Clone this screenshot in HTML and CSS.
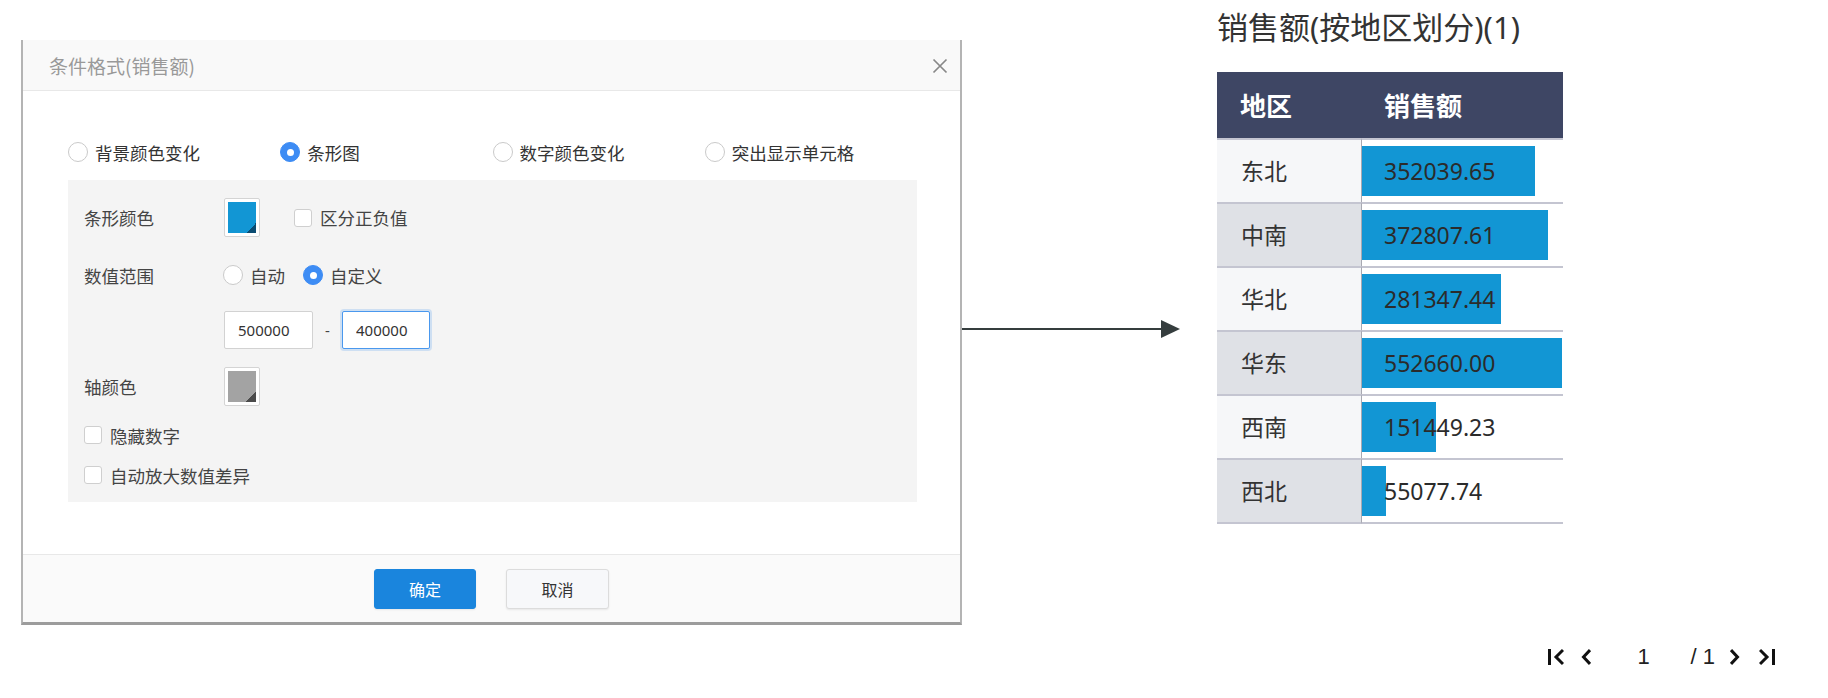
FILE: index.html
```html
<!DOCTYPE html>
<html lang="zh-CN">
<head>
  <meta charset="UTF-8">
  <title>条件格式(销售额)</title>
  <link rel="stylesheet" href="styles.css">
</head>
<body>
  <div class="page">
    <div class="dialog">
      <div class="dialog-head">
        <span class="dialog-title">条件格式(销售额)</span>
        <svg class="close" width="16" height="16" viewBox="0 0 16 16"><path d="M1.5 1.5L14.5 14.5M14.5 1.5L1.5 14.5" stroke="#888" stroke-width="1.7" fill="none"/></svg>
      </div>

      <div class="dialog-body">
        <div class="type-row">
          <span class="opt"><span class="radio"></span>背景颜色变化</span>
          <span class="opt"><span class="radio checked"></span>条形图</span>
          <span class="opt"><span class="radio"></span>数字颜色变化</span>
          <span class="opt"><span class="radio"></span>突出显示单元格</span>
        </div>

        <div class="panel">
          <div class="row row-color">
            <span class="label">条形颜色</span>
            <span class="swatch"><span class="swatch-fill blue"></span></span>
            <span class="check gap-left"><span class="box"></span>区分正负值</span>
          </div>
          <div class="row row-range">
            <span class="label">数值范围</span>
            <span class="opt-sm"><span class="radio"></span>自动</span>
            <span class="opt-sm"><span class="radio checked"></span>自定义</span>
          </div>
          <div class="row row-inputs">
            <input class="num-input" type="text" value="500000">
            <span class="dash">-</span>
            <input class="num-input focus" type="text" value="400000">
          </div>
          <div class="row row-axis">
            <span class="label">轴颜色</span>
            <span class="swatch"><span class="swatch-fill gray"></span></span>
          </div>
          <div class="row row-check">
            <span class="check"><span class="box"></span>隐藏数字</span>
          </div>
          <div class="row row-check last">
            <span class="check"><span class="box"></span>自动放大数值差异</span>
          </div>
        </div>
      </div>

      <div class="dialog-foot">
        <button class="btn btn-primary">确定</button>
        <button class="btn">取消</button>
      </div>
    </div>

    <div class="arrow">
      <span class="arrow-line"></span>
      <span class="arrow-head"></span>
    </div>

    <div class="report">
      <div class="report-title">销售额(按地区划分)(1)</div>
      <table class="grid">
        <thead>
          <tr>
            <th><div class="th-in">地区</div></th>
            <th><div class="th-in th-val">销售额</div></th>
          </tr>
        </thead>
        <tbody>
          <tr class="odd">
            <td class="area"><div class="cell">东北</div></td>
            <td class="val"><div class="cell-bar"><span class="bar" style="width: 173px;"></span><span class="num">352039.65</span></div></td>
          </tr>
          <tr class="even">
            <td class="area"><div class="cell">中南</div></td>
            <td class="val"><div class="cell-bar"><span class="bar" style="width: 186px;"></span><span class="num">372807.61</span></div></td>
          </tr>
          <tr class="odd">
            <td class="area"><div class="cell">华北</div></td>
            <td class="val"><div class="cell-bar"><span class="bar" style="width: 139px;"></span><span class="num">281347.44</span></div></td>
          </tr>
          <tr class="even">
            <td class="area"><div class="cell">华东</div></td>
            <td class="val"><div class="cell-bar"><span class="bar" style="width: 200px;"></span><span class="num">552660.00</span></div></td>
          </tr>
          <tr class="odd">
            <td class="area"><div class="cell">西南</div></td>
            <td class="val"><div class="cell-bar"><span class="bar" style="width: 74px;"></span><span class="num">151449.23</span></div></td>
          </tr>
          <tr class="even">
            <td class="area"><div class="cell">西北</div></td>
            <td class="val"><div class="cell-bar"><span class="bar" style="width: 24px;"></span><span class="num">55077.74</span></div></td>
          </tr>
        </tbody>
      </table>

      <div class="pager">
        <svg class="pg-first" width="16" height="18" viewBox="0 0 16 18"><path d="M1.5 1V17M15 2L8 9L15 16" stroke="#111" stroke-width="3" fill="none"/></svg>
        <svg class="pg-prev" width="10" height="18" viewBox="0 0 10 18"><path d="M9 2L2.5 9L9 16" stroke="#111" stroke-width="3" fill="none"/></svg>
        <span class="pg-cur">1</span>
        <span class="pg-total">/ 1</span>
        <svg class="pg-next" width="10" height="18" viewBox="0 0 10 18"><path d="M1 2L7.5 9L1 16" stroke="#111" stroke-width="3" fill="none"/></svg>
        <svg class="pg-last" width="16" height="18" viewBox="0 0 16 18"><path d="M1 2L8 9L1 16M14.5 1V17" stroke="#111" stroke-width="3" fill="none"/></svg>
      </div>
    </div>
  </div>
</body>
</html>
```

FILE: styles.css
```css
body {
  margin: 0;
  background-color: #fff;
  font-family: "Noto Sans CJK SC", "Noto Sans", sans-serif;
  color: #333;
}

.page {
  display: flex;
  align-items: flex-start;
  width: 1828px;
  height: 698px;
  padding-left: 21px;
  box-sizing: border-box;
}

/* dialog */

.dialog {
  width: 941px;
  margin-top: 40px;
  background-color: #fff;
  border-left: 2px solid #b4b4b4;
  border-right: 2px solid #b4b4b4;
  border-bottom: 3px solid #9c9c9c;
  box-sizing: border-box;
}

.dialog-head {
  height: 50px;
  display: flex;
  align-items: center;
  justify-content: space-between;
  padding: 0 12px 0 26px;
  background-color: #f9f9f9;
  border-bottom: 1px solid #e8e8e8;
}

.dialog-title {
  font-size: 19px;
  color: #999;
}

.close {
  margin-top: 2px;
}

.dialog-body {
  height: 463px;
  padding: 49px 43px 0 45px;
  box-sizing: border-box;
}

.type-row {
  display: flex;
  height: 24px;
  align-items: center;
  margin-bottom: 16px;
}

.opt {
  width: 214px;
  display: flex;
  align-items: center;
  font-size: 17.5px;
  color: #333;
}

.radio {
  width: 20px;
  height: 20px;
  border: 1px solid #cacaca;
  border-radius: 50%;
  background-color: #fff;
  box-sizing: border-box;
  margin-right: 7px;
  flex-shrink: 0;
  display: flex;
  align-items: center;
  justify-content: center;
}

.radio.checked {
  background-color: #3d8cf4;
  border-color: #3d8cf4;
}

.radio.checked::after {
  content: "";
  width: 7px;
  height: 7px;
  border-radius: 50%;
  background-color: #fff;
}

.panel {
  background-color: #f4f4f4;
  padding: 18px 16px 15px;
}

.row {
  display: flex;
  align-items: center;
  font-size: 17.5px;
  color: #444;
}

.label {
  width: 139px;
  flex-shrink: 0;
}

.row-color {
  height: 39px;
}

.row-range {
  height: 24px;
  margin-top: 26px;
}

.row-inputs {
  height: 38px;
  margin-top: 24px;
  padding-left: 140px;
}

.row-axis {
  height: 39px;
  margin-top: 18px;
}

.row-check {
  height: 24px;
  margin-top: 17px;
}

.row-check.last {
  margin-top: 16px;
}

.swatch {
  width: 36px;
  height: 39px;
  padding: 3px;
  border: 1px solid #d4d4d4;
  border-radius: 2px;
  background-color: #fff;
  box-sizing: border-box;
  margin-left: 1px;
}

.swatch-fill {
  display: block;
  width: 100%;
  height: 100%;
}

.swatch-fill.blue {
  background: linear-gradient(135deg, transparent 50%, #0b4c72 50%) right bottom / 10px 10px no-repeat, #1296d4;
}

.swatch-fill.gray {
  background: linear-gradient(135deg, transparent 50%, #4b4b4b 50%) right bottom / 10px 10px no-repeat, #a3a3a3;
}

.check {
  display: flex;
  align-items: center;
  color: #444;
}

.check.gap-left {
  margin-left: 34px;
}

.box {
  width: 18px;
  height: 18px;
  border: 1px solid #cfcfcf;
  border-radius: 3px;
  background-color: #fff;
  box-sizing: border-box;
  margin-right: 8px;
}

.opt-sm {
  display: flex;
  align-items: center;
  margin-right: 18px;
}

.opt-sm:first-of-type {
  margin-left: -1px;
}

.num-input {
  width: 89px;
  height: 38px;
  padding: 0 0 0 13px;
  border: 1px solid #d2d2d2;
  border-radius: 2px;
  background-color: #fff;
  box-sizing: border-box;
  font-family: "Noto Sans", sans-serif;
  font-size: 15px;
  color: #333;
  outline: none;
}

.num-input.focus {
  width: 88px;
  border-color: #4a98ee;
  box-shadow: 0 0 0 2px rgba(74, 152, 238, 0.22);
}

.dash {
  width: 29px;
  text-align: center;
  font-family: "Noto Sans", sans-serif;
  font-size: 15px;
}

.dialog-foot {
  height: 68px;
  display: flex;
  justify-content: center;
  gap: 30px;
  padding-top: 14px;
  box-sizing: border-box;
  background-color: #fafafa;
  border-top: 1px solid #e8e8e8;
}

.btn {
  width: 103px;
  height: 40px;
  border: 1px solid #dcdcdc;
  border-radius: 3px;
  background-color: #f7f8fa;
  box-shadow: 0 1px 2px rgba(0, 0, 0, 0.08);
  font-family: "Noto Sans CJK SC", sans-serif;
  font-size: 16px;
  color: #333;
}

.btn-primary {
  width: 102px;
  border-color: #1a85dd;
  background-color: #1a85dd;
  color: #fff;
}

/* arrow */

.arrow {
  width: 218px;
  margin-top: 319px;
  height: 19px;
  display: flex;
  align-items: center;
}

.arrow-line {
  flex: 1;
  height: 2px;
  background-color: #353d3e;
}

.arrow-head {
  width: 0;
  height: 0;
  border-left: 19px solid #353d3e;
  border-top: 9.5px solid transparent;
  border-bottom: 9.5px solid transparent;
}

/* report */

.report {
  width: 558px;
  margin-left: 37px;
}

.report-title {
  margin-top: 7px;
  height: 40px;
  line-height: 40px;
  font-family: "Noto Sans", "Noto Sans CJK SC", sans-serif;
  font-size: 31px;
  color: #333;
  white-space: nowrap;
}

.grid {
  margin-top: 25px;
  width: 346px;
  border-collapse: separate;
  border-spacing: 0;
  table-layout: fixed;
}

.grid th {
  padding: 0;
  background-color: #3e4664;
  color: #fff;
  text-align: left;
}

.grid th:first-child {
  width: 145px;
}

.th-in {
  height: 66px;
  line-height: 66px;
  padding-left: 23px;
  font-size: 26px;
  font-weight: bold;
}

.th-in.th-val {
  padding-left: 22px;
}

.grid td {
  padding: 0;
  border-top: 2px solid #c4c5d1;
}

.grid tbody tr:last-child td {
  border-bottom: 2px solid #c4c5d1;
}

.grid td.area {
  border-right: 1px solid #a8a9b2;
}

.odd td.area {
  background-color: #f6f7f9;
}

.even td.area {
  background-color: #dfe1e6;
}

.cell {
  height: 62px;
  line-height: 60px;
  padding-left: 24px;
  font-size: 23px;
  color: #333;
}

.cell-bar {
  position: relative;
  height: 62px;
}

.bar {
  position: absolute;
  left: 0;
  top: 6px;
  height: 50px;
  background-color: #1296d4;
}

.num {
  position: relative;
  display: block;
  padding-left: 22px;
  line-height: 62px;
  font-family: "Noto Sans", sans-serif;
  font-size: 23px;
  color: #2b2b2b;
}

.pager {
  margin-top: 124px;
  height: 18px;
  display: flex;
  justify-content: flex-end;
  align-items: center;
  font-family: "Liberation Sans", Arial, sans-serif;
  font-size: 22px;
  color: #222;
}

.pg-prev {
  margin-left: 17px;
}

.pg-cur {
  width: 50px;
  margin-left: 28px;
  text-align: center;
  line-height: 18px;
}

.pg-total {
  margin-left: 22px;
  line-height: 18px;
}

.pg-next {
  margin-left: 15px;
}

.pg-last {
  margin-left: 19px;
}
```
